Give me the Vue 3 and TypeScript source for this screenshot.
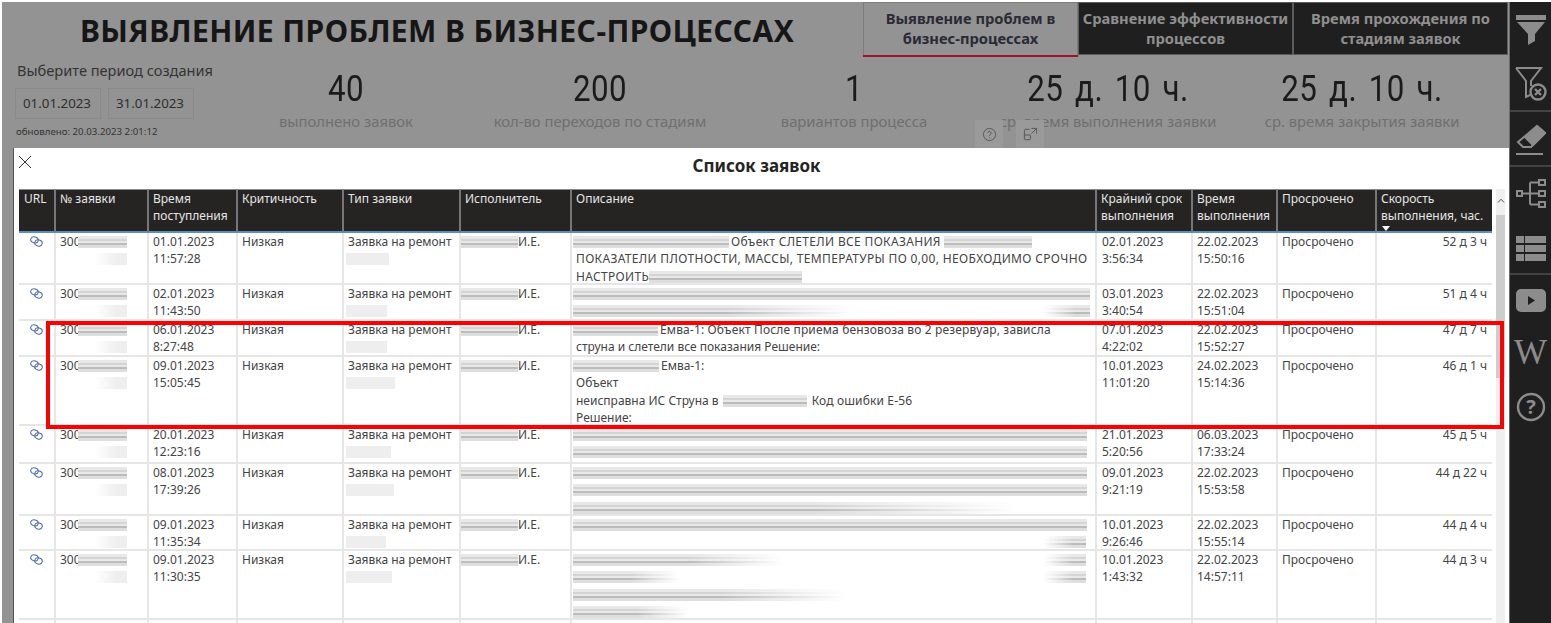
<script setup lang="ts">
type Seg =
  | { kind: 'text'; text: string; tone: string }
  | { kind: 'bar'; width: number; tone: string }
  | { kind: 'space'; width: number }

interface Row {
  height: number
  created: string[]
  typeBar: number
  desc: Seg[][]
  deadline: string[]
  done: string[]
  speed: string
}

const t = (text: string, tone = ''): Seg => ({ kind: 'text', text, tone })
const bar = (width: number, tone = ''): Seg => ({ kind: 'bar', width, tone })
const gap = (width: number): Seg => ({ kind: 'space', width })

const kpis = [
  { value: '40', label: 'выполнено заявок' },
  { value: '200', label: 'кол-во переходов по стадиям' },
  { value: '1', label: 'вариантов процесса' },
  { value: '25 д. 10 ч.', label: 'ср. время выполнения заявки' },
  { value: '25 д. 10 ч.', label: 'ср. время закрытия заявки' },
]

const columns = [
  { title: 'URL', width: 35 },
  { title: '№ заявки', width: 93 },
  { title: 'Время поступления', width: 89 },
  { title: 'Критичность', width: 106 },
  { title: 'Тип заявки', width: 117 },
  { title: 'Исполнитель', width: 111 },
  { title: 'Описание', width: 525 },
  { title: 'Крайний срок выполнения', width: 96 },
  { title: 'Время выполнения', width: 85 },
  { title: 'Просрочено', width: 99 },
  { title: 'Скорость выполнения, час.', width: 117 },
]

const rows: Row[] = [
  {
    height: 52, created: ['01.01.2023', '11:57:28'], typeBar: 43,
    desc: [
      [bar(156), t('Объект СЛЕТЕЛИ ВСЕ ПОКАЗАНИЯ', 'caps'), gap(3), bar(88)],
      [t('ПОКАЗАТЕЛИ ПЛОТНОСТИ, МАССЫ, ТЕМПЕРАТУРЫ ПО 0,00, НЕОБХОДИМО СРОЧНО', 'caps')],
      [t('НАСТРОИТЬ', 'caps'), bar(153)],
    ],
    deadline: ['02.01.2023', '3:56:34'], done: ['22.02.2023', '15:50:16'], speed: '52 д 3 ч',
  },
  {
    height: 36, created: ['02.01.2023', '11:43:50'], typeBar: 41,
    desc: [[bar(517)], [bar(282, 'fade-r'), gap(185), bar(48, 'fade-l')]],
    deadline: ['03.01.2023', '3:40:54'], done: ['22.02.2023', '15:51:04'], speed: '51 д 4 ч',
  },
  {
    height: 36, created: ['06.01.2023', '8:27:48'], typeBar: 41,
    desc: [
      [bar(85), t('Емва-1: Объект После приема бензовоза во 2 резервуар, зависла', 'wide')],
      [t('струна и слетели все показания Решение:')],
    ],
    deadline: ['07.01.2023', '4:22:02'], done: ['22.02.2023', '15:52:27'], speed: '47 д 7 ч',
  },
  {
    height: 69, created: ['09.01.2023', '15:05:45'], typeBar: 49,
    desc: [
      [bar(86), t('Емва-1:')],
      [t('Объект')],
      [t('неисправна ИС Струна в'), gap(4), bar(84), gap(3), t('Код ошибки Е-56', 'wide')],
      [t('Решение:')],
    ],
    deadline: ['10.01.2023', '11:01:20'], done: ['24.02.2023', '15:14:36'], speed: '46 д 1 ч',
  },
  {
    height: 38, created: ['20.01.2023', '12:23:16'], typeBar: 45,
    desc: [[bar(514)], [bar(514)]],
    deadline: ['21.01.2023', '5:20:56'], done: ['06.03.2023', '17:33:24'], speed: '45 д 5 ч',
  },
  {
    height: 52, created: ['08.01.2023', '17:39:26'], typeBar: 48,
    desc: [[bar(514)], [bar(514)], [bar(443, 'fade-r')]],
    deadline: ['09.01.2023', '9:21:19'], done: ['22.02.2023', '15:53:58'], speed: '44 д 22 ч',
  },
  {
    height: 35, created: ['09.01.2023', '11:35:34'], typeBar: 40,
    desc: [[bar(514)], [gap(467), bar(43, 'fade-l')]],
    deadline: ['10.01.2023', '9:26:46'], done: ['22.02.2023', '15:55:14'], speed: '44 д 4 ч',
  },
  {
    height: 69, created: ['09.01.2023', '11:30:35'], typeBar: 46,
    desc: [
      [bar(210, 'fade-r'), gap(258), bar(43, 'fade-l')],
      [bar(106, 'fade-r'), gap(362), bar(43, 'fade-l')],
      [bar(273, 'fade-r')],
      [bar(116, 'fade-r')],
    ],
    deadline: ['10.01.2023', '1:43:32'], done: ['22.02.2023', '14:57:11'], speed: '44 д 3 ч',
  },
]
</script>

<template>
  <div class="page">
    <div class="report">
      <header class="top">
        <h1 class="title">ВЫЯВЛЕНИЕ ПРОБЛЕМ В БИЗНЕС-ПРОЦЕССАХ</h1>
        <nav class="tabs">
          <button class="tab active">Выявление проблем в бизнес-процессах</button>
          <button class="tab">Сравнение эффективности процессов</button>
          <button class="tab">Время прохождения по стадиям заявок</button>
        </nav>
      </header>

      <section class="summary">
        <div class="period">
          <div class="period-label">Выберите период создания</div>
          <div class="dates">
            <span class="date">01.01.2023</span>
            <span class="date">31.01.2023</span>
          </div>
          <div class="updated">обновлено: 20.03.2023 2:01:12</div>
        </div>
        <div class="kpis">
          <div v-for="kpi in kpis" :key="kpi.label" class="kpi">
            <div class="kpi-value">{{ kpi.value }}</div>
            <div class="kpi-label">{{ kpi.label }}</div>
          </div>
        </div>
      </section>

      <div class="visual-tools">
        <span class="tool">
          <svg viewBox="0 0 16 16" width="15" height="15" fill="none" stroke="#555" stroke-width="1">
            <circle cx="8" cy="8" r="6.5" />
            <path d="M6.2 6.4a1.8 1.8 0 1 1 2.7 1.6c-.6.4-.9.7-.9 1.4M8 11v1" />
          </svg>
        </span>
        <span class="tool">
          <svg viewBox="0 0 16 16" width="15" height="15" fill="none" stroke="#555" stroke-width="1">
            <path d="M7 2.5H2.500a1 1 0 0 0-1 1v9a1 1 0 0 0 1 1h4.500a1 1 0 0 0 1-1V9.500a1 1 0 0 0-1-1H1.500M9 1.500h5.500V7M14.500 1.500 9 7" />
          </svg>
        </span>
      </div>

      <div class="modal">
        <button class="close" aria-label="Закрыть">
          <svg viewBox="0 0 14 14" width="14" height="14" fill="none" stroke="#333" stroke-width="1">
            <path d="M1 1l12 12M13 1 1 13" />
          </svg>
        </button>
        <h2 class="modal-title">Список заявок</h2>
        <div class="table-wrap">
          <table class="grid">
            <colgroup>
              <col v-for="col in columns" :key="col.title" :style="{ width: col.width + 'px' }" />
            </colgroup>
            <thead>
              <tr>
                <th v-for="col in columns" :key="col.title">
                  {{ col.title }}
                  <i v-if="col.title.startsWith('Скорость')" class="sort"></i>
                </th>
              </tr>
            </thead>
            <tbody>
              <tr v-for="(row, i) in rows" :key="i" :style="{ height: row.height + 'px' }">
                <td class="link-cell">
                  <svg viewBox="0 0 13 11" width="13" height="11" fill="none" stroke="#5068b5" stroke-width="1">
                    <ellipse cx="4.500" cy="3.800" rx="3.800" ry="3" transform="rotate(15 4.500 3.800)" />
                    <ellipse cx="8.500" cy="7" rx="3.800" ry="3" transform="rotate(15 8.500 7)" />
                  </svg>
                </td>
                <td>
                  <div class="line">300<span class="smear id-bar" style="width: 49px"></span></div>
                  <div class="line tail"><span class="smear pale fade-l" style="width: 32px"></span></div>
                </td>
                <td><div v-for="l in row.created" :key="l" class="line">{{ l }}</div></td>
                <td><div class="line">Низкая</div></td>
                <td>
                  <div class="line">Заявка на ремонт</div>
                  <div class="line"><span class="smear pale type-bar" :style="{ width: row.typeBar + 'px' }"></span></div>
                </td>
                <td class="exec"><div class="line"><span class="smear" style="width: 57px"></span>И.Е.</div></td>
                <td class="desc">
                  <div v-for="(segs, n) in row.desc" :key="n" class="line">
                    <template v-for="(seg, k) in segs" :key="k">
                      <span v-if="seg.kind === 'text'" :class="seg.tone">{{ seg.text }}</span>
                      <span v-else-if="seg.kind === 'bar'" class="smear" :class="seg.tone" :style="{ width: seg.width + 'px' }"></span>
                      <span v-else class="spacer" :style="{ width: seg.width + 'px' }"></span>
                    </template>
                  </div>
                </td>
                <td class="date-cell"><div v-for="l in row.deadline" :key="l" class="line">{{ l }}</div></td>
                <td><div v-for="l in row.done" :key="l" class="line">{{ l }}</div></td>
                <td><div class="line">Просрочено</div></td>
                <td class="speed"><div class="line">{{ row.speed }}</div></td>
              </tr>
              <tr class="next-row">
                <td v-for="col in columns" :key="col.title"></td>
              </tr>
            </tbody>
          </table>
          <div class="scrollbar">
            <svg class="scroll-up" viewBox="0 0 8 5" width="8" height="5" fill="none" stroke="#555" stroke-width="1">
              <path d="M1 4.500 4 1.200l3 3.300" />
            </svg>
            <div class="thumb"></div>
          </div>
        </div>
      </div>

      <div class="highlight"></div>
    </div>

    <aside class="rail">
      <div class="rail-group group-filters">
        <svg viewBox="0 0 30 30" width="30" height="30" fill="#8c8c8c">
          <path d="M0 0h30v5H0zM1 7h28L19 19v7l-7 4V19z" />
        </svg>
        <svg viewBox="0 0 34 36" width="34" height="36" fill="none" stroke="#8c8c8c" stroke-width="2">
          <path d="M2 2h25L17 15v5M2 2l10 13v16l4-2" />
          <circle cx="24" cy="26" r="7.500" stroke-width="2.400" />
          <path d="M21 23l6 6M27 23l-6 6" stroke-width="2.400" />
        </svg>
      </div>
      <div class="rail-group group-erase">
        <svg viewBox="0 0 30 32" width="30" height="32" fill="none" stroke="#8c8c8c" stroke-width="2">
          <path d="M21 2 29 9 15 23H7l-5-5z" />
          <path d="M21 2 29 9 17 21 9 13z" fill="#8c8c8c" />
          <path d="M0 30h27" />
        </svg>
      </div>
      <div class="rail-group group-views">
        <svg viewBox="0 0 30 30" width="30" height="30" fill="none" stroke="#8c8c8c" stroke-width="2">
          <rect x="1" y="12" width="5" height="5" />
          <rect x="23" y="1" width="6" height="5" />
          <rect x="23" y="12" width="6" height="5" />
          <rect x="23" y="23" width="6" height="5" />
          <path d="M6 14.500h17M14 3.500v22M14 3.500h9M14 25.500h9" />
        </svg>
        <svg viewBox="0 0 30 26" width="30" height="26" fill="#8c8c8c">
          <path d="M0 0h8v7H0zM9 0h21v7H9zM0 9h8v7H0zM9 9h21v7H9zM0 18h8v7H0zM9 18h21v7H9z" />
        </svg>
      </div>
      <div class="rail-group group-help">
        <svg viewBox="0 0 30 24" width="30" height="24">
          <rect x="0" y="0" width="30" height="23" rx="5" fill="#8c8c8c" />
          <path d="M12 7l7 4.500-7 4.500z" fill="#1f1f1f" />
        </svg>
        <span class="wiki">W</span>
        <svg viewBox="0 0 30 30" width="30" height="30" fill="none" stroke="#8c8c8c">
          <circle cx="15" cy="15" r="13" stroke-width="2.400" />
          <text x="15" y="22" text-anchor="middle" class="help-mark">?</text>
        </svg>
      </div>
    </aside>
  </div>
</template>

<style>
html,
body {
  margin: 0;
  background: #fff;
  overflow: hidden;
}
</style>

<style scoped>
.page {
  width: 1551px;
  height: 623px;
  display: flex;
  padding: 2px 0 0 2px;
  box-sizing: border-box;
  overflow: hidden;
  font-family: "Noto Sans", "Open Sans", sans-serif;
}

.report {
  flex: 1;
  background: #939393;
  display: flex;
  flex-direction: column;
}

.top {
  display: flex;
  height: 53px;
}

.title {
  flex: 1;
  margin: 0;
  padding-left: 78px;
  font-size: 30px;
  letter-spacing: 0.43px;
  line-height: 57px;
  font-weight: 700;
  color: #161616;
  white-space: nowrap;
}

.tabs {
  display: flex;
  padding-right: 1px;
}

.tab {
  width: 215px;
  height: 53px;
  box-sizing: border-box;
  background: #1f1f1f;
  border: 1.5px solid #5c5c5c;
  color: #8f8f8f;
  font: 700 14.7px/20px "Noto Sans", sans-serif;
  padding: 0 0 2px;
}

.tab.active {
  background: #939393;
  border-color: #7c7c7c;
  border-bottom: 0;
  color: #2a2a35;
  box-shadow: 0 2px 0 #a01028;
}

.summary {
  display: flex;
  height: 93px;
}

.period {
  width: 217px;
  flex: none;
  padding: 5px 0 0 13px;
  box-sizing: border-box;
}

.period-label {
  font-size: 14.6px;
  line-height: 20px;
  margin-left: 2px;
  color: #333;
  white-space: nowrap;
}

.dates {
  display: flex;
  gap: 7px;
  margin-top: 8px;
}

.date {
  width: 86px;
  height: 31px;
  box-sizing: border-box;
  border: 1px solid #8a8a8a;
  font-size: 13.3px;
  line-height: 29px;
  padding-right: 2px;
  text-align: center;
  color: #2e2e2e;
}

.updated {
  margin: 6px 0 0 1px;
  font-size: 9.7px;
  line-height: 14px;
  color: #333;
  white-space: nowrap;
}

.kpis {
  flex: 1;
  display: grid;
  grid-template-columns: repeat(5, 254px);
}

.kpi {
  text-align: center;
  padding-top: 14px;
}

.kpi-value {
  font: 400 36px/40px Roboto, sans-serif;
  letter-spacing: 0.5px;
  word-spacing: 4px;
  color: #1b1b1b;
  transform: scaleX(0.87);
  white-space: nowrap;
}

.kpi-label {
  font-size: 14.8px;
  line-height: 20px;
  margin-top: 2px;
  color: #6f6f6f;
}

.visual-tools {
  position: absolute;
  left: 975px;
  top: 120px;
  display: flex;
  gap: 13px;
}

.tool {
  width: 28px;
  height: 28px;
  background: #9a9a9a;
  display: flex;
  align-items: center;
  justify-content: center;
}

.modal {
  position: absolute;
  left: 13px;
  top: 148px;
  width: 1496px;
  height: 475px;
  background: #fff;
  border-left: 1px solid #555;
  box-sizing: border-box;
  overflow: hidden;
}

.close {
  position: absolute;
  left: 4px;
  top: 7px;
  padding: 0;
  border: 0;
  background: none;
  line-height: 0;
}

.modal-title {
  margin: 0;
  text-align: center;
  font-size: 17px;
  line-height: 22px;
  padding: 7px 10px 0 0;
  font-weight: 700;
  color: #252423;
}

.table-wrap {
  display: flex;
  margin: 12px 0 0 5px;
  align-items: flex-start;
}

.grid {
  width: 1473px;
  flex: none;
  table-layout: fixed;
  border-collapse: separate;
  border-spacing: 0;
  font-size: 12px;
  line-height: 17.33px;
  color: #444;
}

.grid th {
  height: 44px;
  box-sizing: border-box;
  background: #252423;
  color: #e6e6e6;
  font-weight: 400;
  text-align: left;
  vertical-align: top;
  padding: 0 3px 0 4px;
  border-top: 1px solid #8a8a8a;
  border-left: 2px solid #77767a;
  border-bottom: 2px solid #5b8fc0;
  position: relative;
}

.grid th:first-child {
  border-left: 0;
  padding-left: 5px;
}

.sort {
  position: absolute;
  left: 5px;
  bottom: 0;
  border: 4px solid transparent;
  border-top: 5px solid #fff;
  border-bottom: 0;
}

.grid td {
  vertical-align: top;
  padding: 0 5px 0 4px;
  border-left: 2px solid #e6e6e6;
  border-bottom: 2px solid #e6e6e6;
  white-space: nowrap;
  overflow: hidden;
}

.grid td:first-child {
  border-left: 0;
}

.grid .link-cell {
  text-align: center;
  padding: 0;
}

.grid .date-cell {
  padding-left: 5px;
}

.link-cell svg {
  margin-top: 3px;
}

.next-row td {
  height: 10px;
  border-bottom: 0;
}

.line {
  height: 17.33px;
  white-space: nowrap;
}

.line:last-child {
  height: 15px;
}

.tail {
  text-align: right;
  padding-right: 15px;
}

.smear {
  display: inline-block;
  height: 12px;
  vertical-align: -2px;
  background: linear-gradient(
    180deg,
    #e8e8e8 0 3px,
    #d4d4d4 3px 5px,
    #e8e8e8 5px 7px,
    #bcbcbc 7px 9px,
    #dedede 9px 12px
  );
}

.smear.pale {
  background: #eeeeee;
}

.fade-l {
  -webkit-mask-image: linear-gradient(90deg, transparent, #000 70%);
  mask-image: linear-gradient(90deg, transparent, #000 70%);
}

.fade-r {
  -webkit-mask-image: linear-gradient(90deg, #000 55%, transparent);
  mask-image: linear-gradient(90deg, #000 55%, transparent);
}

.id-bar {
  margin-left: -3px;
}

.type-bar {
  margin-left: -2px;
}

.grid .exec {
  padding-left: 0;
}

.desc .smear {
  margin-right: 2px;
}

.desc .smear:first-child {
  margin-left: -3px;
}

.caps {
  letter-spacing: 0.33px;
}

.wide {
  letter-spacing: 0.15px;
}

.spacer {
  display: inline-block;
}

.speed {
  text-align: right;
}

.scrollbar {
  position: relative;
  flex: none;
  width: 9px;
  height: 434px;
  margin-left: 4px;
  background: #efefef;
}

.scroll-up {
  position: absolute;
  left: 1px;
  top: 9px;
}

.thumb {
  position: absolute;
  top: 26px;
  left: 0;
  right: 0;
  height: 163px;
  background: #cdcdcd;
}

.highlight {
  position: absolute;
  left: 46px;
  top: 321px;
  width: 1458px;
  height: 108px;
  box-sizing: border-box;
  border: 4px solid #ff0000;
}

.rail {
  width: 42px;
  flex: none;
  background: #1f1f1f;
  border-left: 1px solid #6a6a6a;
  box-sizing: border-box;
  display: flex;
  flex-direction: column;
  align-items: stretch;
}

.rail-group {
  display: flex;
  flex-direction: column;
  align-items: center;
  border-bottom: 2px solid #444;
  box-sizing: border-box;
}

.group-filters {
  height: 110px;
  padding-top: 13px;
  gap: 21px;
}

.group-erase {
  height: 55px;
  padding-top: 12px;
}

.group-views {
  height: 108px;
  padding-top: 12px;
  gap: 27px;
}

.group-help {
  border-bottom: 0;
  padding-top: 14px;
}

.wiki {
  font: 400 35px/35px "Liberation Serif", serif;
  color: #8c8c8c;
  margin-top: 22px;
}

.group-help svg:last-child {
  margin-top: 22px;
}

.help-mark {
  font: 700 20px "Noto Sans", sans-serif;
  fill: #8c8c8c;
  stroke: none;
}
</style>
